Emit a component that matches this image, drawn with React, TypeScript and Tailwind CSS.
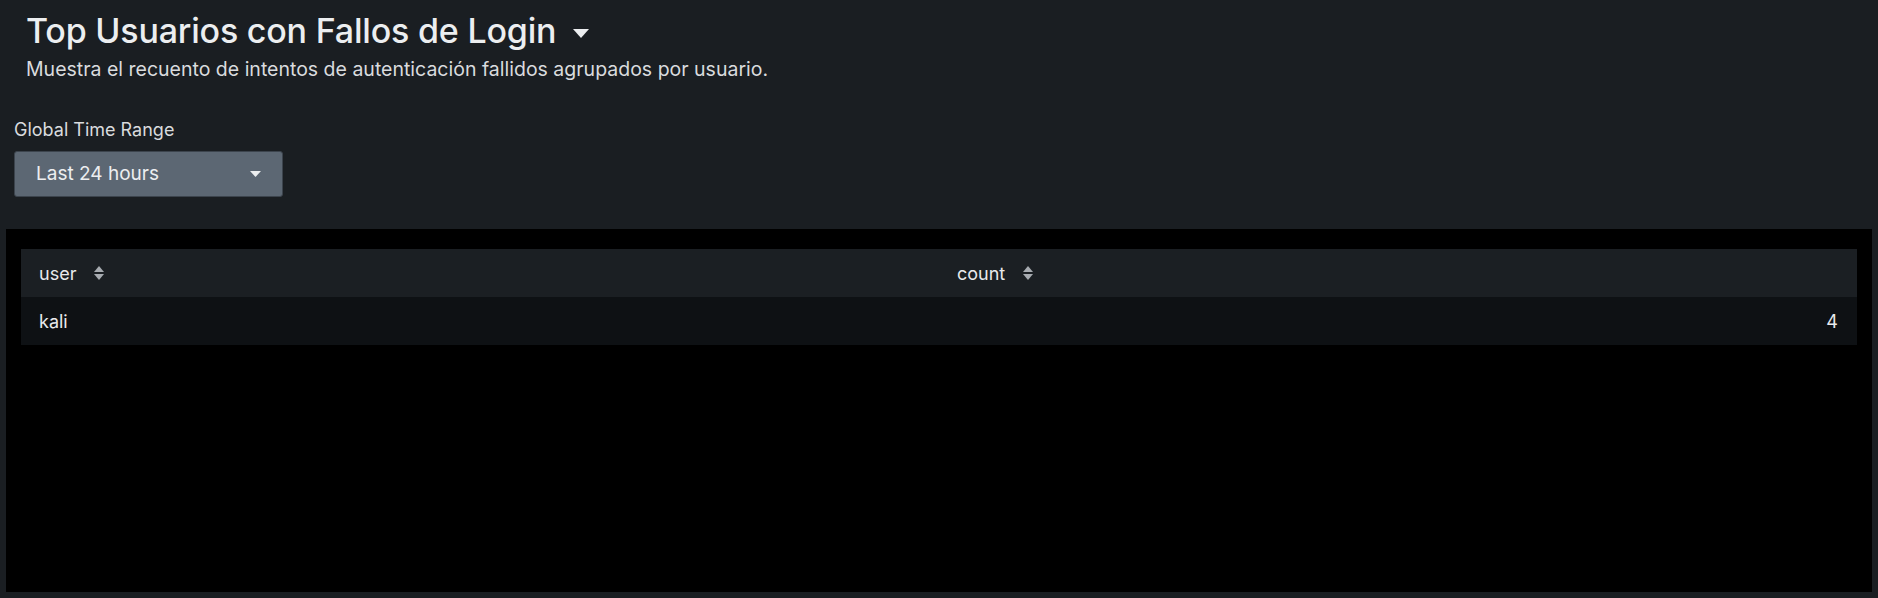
import React from "react";

const Sort = () => (
  <svg width="10" height="16" viewBox="0 0 10 16" className="ml-[18px]">
    <path d="M5 1 L10 7 L0 7 Z" fill="#a7abb0" />
    <path d="M5 15 L10 9 L0 9 Z" fill="#a7abb0" />
  </svg>
);

export default function App() {
  return (
    <div
      className="w-[1878px] h-[598px] bg-[#1a1e22] flex flex-col text-[#e9eaec] overflow-hidden"
      style={{ fontFamily: "Inter, 'Open Sans', sans-serif" }}
    >
      <div className="pl-[26px] pt-[11px]">
        <div className="flex items-center h-[40px]">
          <h1 className="text-[34px] leading-[40px] font-medium tracking-[-0.2px] text-[#eceef0]">
            Top Usuarios con Fallos de Login
          </h1>
          <svg width="16" height="10" viewBox="0 0 16 10" className="ml-[17px] mt-[5px]">
            <path d="M0 0 L16 0 L8 9 Z" fill="#eceef0" />
          </svg>
        </div>
        <p className="text-[19.5px] leading-[24px] mt-[6px] text-[#d9dbde]">
          Muestra el recuento de intentos de autenticación fallidos agrupados por usuario.
        </p>
      </div>
      <div className="pl-[14px] mt-[39px]">
        <div className="text-[18px] leading-[20px] text-[#d9dbde]">Global Time Range</div>
        <button className="mt-[11px] w-[269px] h-[46px] bg-[#5c6773] border border-[#3c444d] rounded-[3px] flex items-center justify-between pl-[21px] pr-[21px] text-[19px] text-[#eceef0]">
          <span>Last 24 hours</span>
          <svg width="11" height="7" viewBox="0 0 11 7">
            <path d="M0 0 L11 0 L5.5 6 Z" fill="#eceef0" />
          </svg>
        </button>
      </div>
      <div className="mx-[6px] mt-[32px] h-[363px] bg-black px-[15px] pt-[20px]">
        <div className="grid grid-cols-2">
          <div className="h-[48px] bg-[#1b1f23] flex items-center pl-[18px] text-[18px]">
            user
            <Sort />
          </div>
          <div className="h-[48px] bg-[#1b1f23] flex items-center pl-[18px] text-[18px]">
            count
            <Sort />
          </div>
          <div className="h-[48px] bg-[#0e1114] flex items-center pl-[18px] text-[18px]">kali</div>
          <div className="h-[48px] bg-[#0e1114] flex items-center justify-end pr-[19px] text-[18px]">4</div>
        </div>
      </div>
    </div>
  );
}
